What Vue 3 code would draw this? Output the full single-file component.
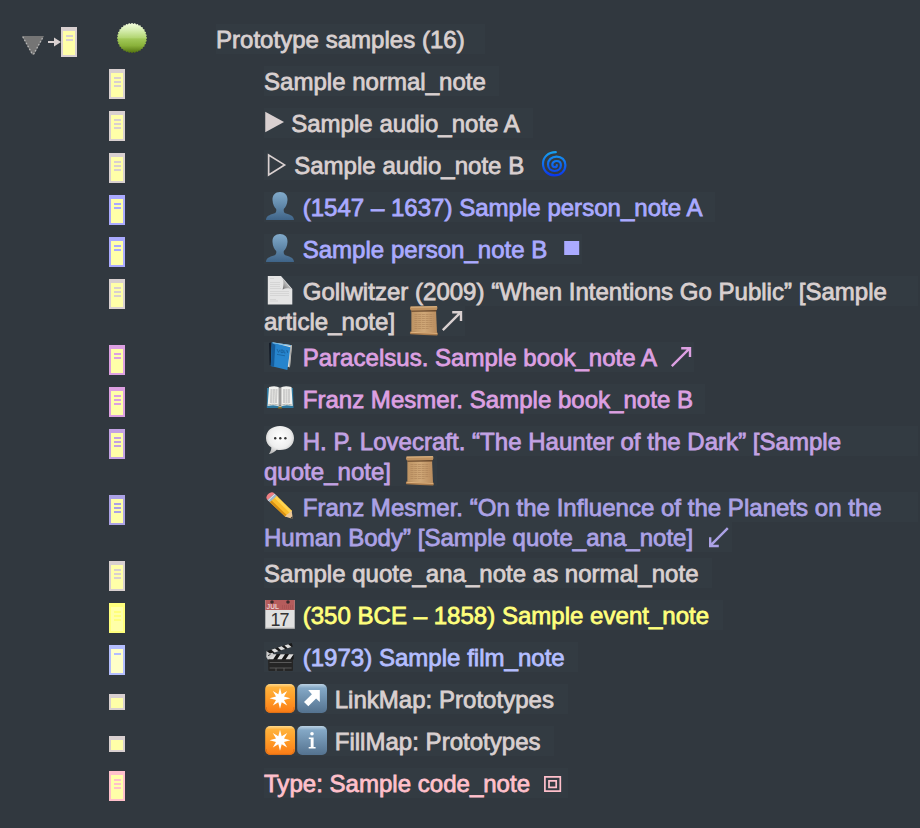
<script setup>
const notes = [
  { tone: 'plain', bars: 3, lines: [{ w: 235, parts: ['Sample normal_note'] }] },
  { tone: 'plain', bars: 3, lines: [{ w: 269, parts: [{ i: 'play', w: 20.5 }, ' Sample audio_note A'] }] },
  { tone: 'plain', bars: 3, lines: [{ w: 306, parts: [{ i: 'play-open', w: 23.5 }, ' Sample audio_note B  ', { i: 'spiral', w: 32 }] }] },
  { tone: 'person', bars: 2, lines: [{ w: 451, parts: [{ i: 'person', w: 32 }, ' (1547 – 1637) Sample person_note A'] }] },
  { tone: 'person', bars: 2, lines: [{ w: 318, parts: [{ i: 'person', w: 32 }, ' Sample person_note B  ', { i: 'square', w: 20 }] }] },
  {
    tone: 'plain', bars: 3, lines: [
      { w: 654, parts: [{ i: 'page', w: 32 }, ' Gollwitzer (2009) “When Intentions Go Public” [Sample'] },
      { w: 201, parts: ['article_note]  ', { i: 'scroll', w: 32 }, { i: 'arrow-ne', w: 24 }] },
    ],
  },
  { tone: 'book', bars: 2, lines: [{ w: 430, parts: [{ i: 'book', w: 32 }, ' Paracelsus. Sample book_note A  ', { i: 'arrow-ne', w: 24 }] }] },
  { tone: 'book', bars: 3, lines: [{ w: 441, parts: [{ i: 'open-book', w: 32 }, ' Franz Mesmer. Sample book_note B'] }] },
  {
    tone: 'quote', bars: 3, lines: [
      { w: 654, parts: [{ i: 'bubble', w: 32 }, ' H. P. Lovecraft. “The Haunter of the Dark” [Sample'] },
      { w: 173, parts: ['quote_note]  ', { i: 'scroll', w: 32 }] },
    ],
  },
  {
    tone: 'analysis', bars: 3, lines: [
      { w: 654, parts: [{ i: 'pencil', w: 32 }, ' Franz Mesmer. “On the Influence of the Planets on the'] },
      { w: 468, parts: ['Human Body” [Sample quote_ana_note]  ', { i: 'arrow-sw', w: 24 }] },
    ],
  },
  { tone: 'plain', bars: 3, lines: [{ w: 448, parts: ['Sample quote_ana_note as normal_note'] }] },
  { tone: 'event', bars: 3, lines: [{ w: 459, parts: [{ i: 'calendar', w: 32 }, ' (350 BCE – 1858) Sample event_note'] }] },
  { tone: 'film', bars: 1, lines: [{ w: 314, parts: [{ i: 'clapper', w: 32 }, ' (1973) Sample film_note'] }] },
  { tone: 'plain', bars: 0, lines: [{ w: 304, parts: [{ i: 'star', w: 32 }, { i: 'link', w: 32 }, ' LinkMap: Prototypes'] }] },
  { tone: 'plain', bars: 0, lines: [{ w: 290, parts: [{ i: 'star', w: 32 }, { i: 'info', w: 32 }, ' FillMap: Prototypes'] }] },
  { tone: 'code', bars: 3, lines: [{ w: 304, parts: ['Type: Sample code_note  ', { i: 'nested', w: 20 }] }] },
]

const badge = Array.from({ length: 64 }, (_, k) => {
  const r = k % 2 ? 14.1 : 15.2
  const a = (k * Math.PI) / 32
  return `${(15 + r * Math.cos(a)).toFixed(2)},${(15 + r * Math.sin(a)).toFixed(2)}`
}).join(' ')
</script>

<template>
  <svg class="sprites" width="0" height="0" aria-hidden="true">
    <defs>
      <linearGradient id="g-ball" x1="0" y1="0" x2="0" y2="1">
        <stop offset="0" stop-color="#f6ffe0" /><stop offset=".25" stop-color="#d5edae" /><stop offset=".49" stop-color="#b3d673" /><stop offset=".53" stop-color="#a1c858" /><stop offset=".75" stop-color="#8ab23b" /><stop offset="1" stop-color="#506f0c" />
      </linearGradient>
      <linearGradient id="g-spiral" x1="0" y1="0" x2="0" y2="1"><stop offset="0" stop-color="#16a0f0" /><stop offset="1" stop-color="#0a38ee" /></linearGradient>
      <linearGradient id="g-person" x1="0" y1="0" x2="0" y2="1"><stop offset="0" stop-color="#82abcb" /><stop offset="1" stop-color="#3f6488" /></linearGradient>
      <linearGradient id="g-fold" x1="0" y1="1" x2="1" y2="0"><stop offset="0" stop-color="#555" /><stop offset=".4" stop-color="#aaa" /><stop offset="1" stop-color="#fff" /></linearGradient>
      <linearGradient id="g-scroll" x1="0" y1="0" x2="1" y2="0"><stop offset="0" stop-color="#bd9363" /><stop offset=".5" stop-color="#d0a878" /><stop offset="1" stop-color="#b98c5e" /></linearGradient>
      <linearGradient id="g-orange" x1="0" y1="0" x2="0" y2="1"><stop offset="0" stop-color="#ffd98c" /><stop offset=".12" stop-color="#ffb23c" /><stop offset=".5" stop-color="#ff9d28" /><stop offset="1" stop-color="#fb7b16" /></linearGradient>
      <linearGradient id="g-blue" x1="0" y1="0" x2="0" y2="1"><stop offset="0" stop-color="#bdd3e4" /><stop offset=".14" stop-color="#84a8c6" /><stop offset="1" stop-color="#54728f" /></linearGradient>
      <radialGradient id="g-bubble" cx=".5" cy=".4" r=".6"><stop offset="0" stop-color="#fff" /><stop offset=".65" stop-color="#eee" /><stop offset="1" stop-color="#bdbdbd" /></radialGradient>
    </defs>

    <symbol id="i-play" viewBox="0 0 20 30"><path d="M1 3.7V24.3L19.8 14Z" fill="currentColor" /></symbol>
    <symbol id="i-play-open" viewBox="0 0 23 30"><path d="M4.4 5V24.9L20.3 14.9Z" fill="none" stroke="currentColor" stroke-width="1.7" /></symbol>
    <symbol id="i-spiral" viewBox="0 0 32 30">
      <path transform="translate(.6 .2)" d="M17.2 2C9.5 2 4.4 6.8 4.4 13.6C4.4 20.4 9.6 25.2 15.8 25.2C22.2 25.2 26.8 20.8 26.8 14.8C26.8 9.6 23 6.4 18 6.4C12.8 6.4 9.4 9.8 9.4 14C9.4 18.2 12.4 20.8 16 20.8C20 20.8 22.3 18.2 22.3 15.1C22.3 12.4 20.4 10.8 18 10.8C15.4 10.8 13.7 12.5 13.7 14.4C13.7 16.2 15 17 16.2 17C17.6 17 18.4 16.2 18.2 14.9" fill="none" stroke="url(#g-spiral)" stroke-width="2.2" stroke-linecap="round" />
    </symbol>
    <symbol id="i-person" viewBox="0 0 32 30"><path d="M16 0C20.8 0 23.7 3 23.5 8C23.3 12.5 21.6 15.3 19.8 17C19.4 19.4 20 20.8 22 21.6C26.8 23.2 29.7 24 30 28H2C2.3 24 5.2 23.2 10 21.6C12 20.8 12.6 19.4 12.2 17C10.4 15.3 8.7 12.5 8.5 8C8.3 3 11.2 0 16 0Z" fill="url(#g-person)" /></symbol>
    <symbol id="i-square" viewBox="0 0 20 30"><rect x="3.2" y="7" width="15" height="14" fill="currentColor" /></symbol>
    <symbol id="i-page" viewBox="0 0 32 30">
      <path d="M3.8 0H17L28.3 13V28.4H3.8Z" fill="#e4e4e4" />
      <path d="M6 2.5h4M6 6.5h10M6 8.5h10M6 10.5h10M6 12.5h11M6 15.5h19M6 17.5h19M6 19.5h19M6 23.5h6M6 25h8" stroke="#d2d2d2" stroke-width=".9" />
      <path d="M16.5 0C20 3 20 8 18.6 13.4C22 11.8 26 12 28.3 14.2Z" fill="url(#g-fold)" />
    </symbol>
    <symbol id="i-scroll" viewBox="0 0 32 30">
      <path d="M3.4 3H28L29 27H3.4Z" fill="url(#g-scroll)" />
      <path d="M6.5 8.5h19M6.5 10.5h19M6.5 12.5h19M6.5 14.5h19M6.5 16.5h19M6.5 18.5h19M6.5 20.5h19M6.5 22.5h15" stroke="#ab8257" stroke-width=".6" stroke-dasharray="3 .7" />
      <path d="M3.4 4.6L28.4 4V5.6L3.4 5.8Z" fill="#67472b" />
      <path d="M2.4 .5L29 0Q30 2 28.8 4L2.6 4.3Q1.4 2.5 2.4 .5Z" fill="#bd905f" />
      <path d="M2.8 1.2L28.8 .8" stroke="#dcb686" />
      <path d="M2.4 25.5Q16 27 29.4 26.5Q30.6 28 29.2 29.4Q16 29.2 2.4 28.3Q1.2 27 2.4 25.5Z" fill="#a97b4d" /><path d="M2.6 26.3L29.2 27.4" stroke="#dfb37f" />
    </symbol>
    <symbol id="i-arrow-ne" viewBox="0 0 24 30"><path d="M2.8 24.2L20.6 6.4M12.2 6.2H21V15" fill="none" stroke="currentColor" stroke-width="2.4" /></symbol>
    <symbol id="i-arrow-sw" viewBox="0 0 24 30"><path d="M20.8 6.2L3.4 23.6M11.8 24H3.2V15.2" fill="none" stroke="currentColor" stroke-width="2.4" /></symbol>
    <symbol id="i-book" viewBox="0 0 32 30">
      <path d="M5 1L7.8 .3L9 24.2L5.6 23Z" fill="#161d28" />
      <path d="M9 .4L28 3.2L26 25L9 23.5Z" fill="#e6e1d8" /><path d="M27.2 3L25.4 25.5" stroke="#989898" stroke-width=".8" />
      <path d="M7.6 .3L26.4 5.2L23.4 27.9L6.8 23.9Z" fill="#2684cd" /><path d="M8 .7L11.3 3L10 24.7L6.8 23.9Z" fill="#165c9a" />
      <path d="M8.5 .8L27 3.6" stroke="#70b7e5" />
      <path d="M13 7l1.5 3.4L16 7.6M17 8h2v2.6h-2zM20 8.4v2.5h1.5M22 8.8h1.5v2.2M13 12.4l8 1.4" fill="none" stroke="#175a94" stroke-width=".7" />
    </symbol>
    <symbol id="i-open-book" viewBox="0 0 32 30">
      <path d="M3 4L29 4L29.5 24H2.8Z" fill="#2e789f" />
      <path d="M5 3Q12 1 16 4Q20 1 27.5 3L28.7 22Q20.5 20 16.2 23Q11 20 3.6 22Z" fill="#f1f1ee" />
      <path d="M4 21Q11.5 19 16 22Q20.5 19 28.4 21" fill="none" stroke="#b9b9b3" />
      <path d="M16 4V22" stroke="#555" stroke-width="1.2" /><path d="M14.8 3.8V21M17.2 3.8V21" stroke="#bbb" stroke-width="1" />
      <path d="M6.5 6h7M6.4 8h7M6.3 10h7M6.2 12h7M6.1 14h7M6 16h7M6 18h7M19 6h7M19 8h7M19 10h7M19 12h7M19 14h7M19 16h7M19 18h7" stroke="#999" stroke-width=".8" stroke-dasharray="2 .5" />
      <path d="M14.2 22.7h3.6v1.8h-3.6z" fill="#866e28" />
    </symbol>
    <symbol id="i-bubble" viewBox="0 0 32 30">
      <path d="M16 0C24.2 0 30 4.9 30 12C30 19.3 24.2 24 16 24C14.8 24 13.7 23.9 12.7 23.7C10.6 26 8 27.4 4.9 28C6.4 26.2 7.3 24 7.4 21.5C3.9 19.4 2 16.2 2 12C2 4.9 7.8 0 16 0Z" fill="url(#g-bubble)" />
      <circle cx="11.2" cy="12.3" r="1.2" fill="#333" /><circle cx="16.3" cy="12.3" r="1.2" fill="#333" /><circle cx="21.4" cy="12.3" r="1.2" fill="#333" />
    </symbol>
    <symbol id="i-pencil" viewBox="0 0 32 30">
      <path d="M2.3 5.8Q2.8 1.8 7 .4Q9 0 10.4 1.4L13 4L6.2 10.4L3 7.5Z" fill="#ee7f83" />
      <path d="M10.5 1.8L13.6 4.6L6.6 10.8L3.5 8Z" fill="#9fb8c8" /><path d="M10.8 2.2L4.2 8.5" stroke="#dbe6ec" />
      <path d="M12.8 4L28 19L21.6 25L5.8 10.2Z" fill="#fbbd2c" /><path d="M12.8 4L28 19L26 21L10.7 6.2Z" fill="#ffd450" /><path d="M7.6 8.6L5.8 10.2L21.6 25L23.2 23.5Z" fill="#d78f14" />
      <path d="M27.6 18.4L28.9 26.9L21 24.6L23 22.6L25 21Z" fill="#edc895" /><path d="M28.4 24.2L28.9 26.9L26.2 26.2Z" fill="#333" />
    </symbol>
    <symbol id="i-calendar" viewBox="0 0 32 30">
      <rect x="1.3" y="0" width="29.4" height="28.6" fill="#e0e0e0" /><rect x="1.3" y="0" width="29.4" height="10" fill="#b65c5c" />
      <circle cx="8" cy="2" r="1.8" fill="#3b2b2d" /><circle cx="24" cy="2" r="1.8" fill="#3b2b2d" />
      <path d="M18 6h11M18 8h11" stroke="#9e4d4d" stroke-dasharray="1 1" /><path d="M1.3 28.2H30.7" stroke="#aaa" />
    </symbol>
    <symbol id="i-clapper" viewBox="0 0 32 30">
      <path d="M4 12H29V28Q29 29 28 29H5.5Q4.3 29 4.3 28Z" fill="#252525" />
      <path d="M2.6 9.2L27.7 1L28.8 4.5L4.5 12.5Z" fill="#181818" />
      <path d="M7.4 7.7L11 6.5L14.6 9.2L10.5 10.5ZM14 5.5L17.7 4.3L21.1 7L17.1 8.3ZM20.5 3.4L24.2 2.2L27.5 4.9L23.6 6.2Z" fill="#ddd" />
      <path d="M4 12.3H29.6V17.3H4Z" fill="#151515" />
      <path d="M8 12.3H12.5L9.2 17.3H4.7ZM16.5 12.3H21L17.7 17.3H13.2ZM25 12.3H29.6L26.2 17.3H21.7Z" fill="#ddd" />
      <path d="M2.5 9L6 11.5L8.5 10.8L10 13.5L4 17.8L2.3 15Z" fill="#ccc" /><path d="M4 13.6L6.4 12.5" stroke="#333" />
      <path d="M5.6 20.5h22M5.6 26h22M12 26v3M20 26v3" stroke="#666" stroke-width=".8" />
    </symbol>
    <symbol id="i-star" viewBox="0 0 32 30">
      <rect x="1.2" y="0" width="29.8" height="29" rx="5" fill="url(#g-orange)" /><path d="M2.2 23Q2.4 28.4 6.5 28.4H25.7Q29.8 28.4 30 23" fill="none" stroke="#d46d16" stroke-width=".8" />
      <path d="M16 3.8L17.7 10.3L23.2 6.9L20 12.4L26.4 14.2L20 16L23.2 21.5L17.7 18.2L16 24.7L14.3 18.2L8.8 21.5L12 16L5.6 14.2L12 12.4L8.8 6.9L14.3 10.3Z" fill="#fff" />
    </symbol>
    <symbol id="i-link" viewBox="0 0 32 30">
      <rect x="1.2" y="0" width="29.8" height="29" rx="5" fill="url(#g-blue)" /><path d="M12.2 6H23.8V18L20.1 14.4L12.3 22.3L8 18L15.9 10.2Z" fill="#fff" />
    </symbol>
    <symbol id="i-info" viewBox="0 0 32 30">
      <rect x="1.2" y="0" width="29.8" height="29" rx="5" fill="url(#g-blue)" /><circle cx="16" cy="7.8" r="1.8" fill="#fff" /><path d="M12.8 11.4H17.6V21H19.6V22.6H12.7V21H14.7V13H12.8Z" fill="#fff" />
    </symbol>
    <symbol id="i-nested" viewBox="0 0 20 30"><path d="M1.9 8.8H17.3V23.2H1.9ZM6 12.8H13.2V19.4H6Z" fill="none" stroke="currentColor" stroke-width="1.7" /></symbol>
  </svg>

  <main class="outline">
    <header class="row plain">
      <div class="controls">
        <svg class="disclosure" viewBox="0 0 22 19"><path d="M0 0H22L12 18.5H10Z" fill="#757575" /><path d="M.8 .8L10.2 17.8H11.8L21.2 .8" fill="none" stroke="#b5b5b5" stroke-width="1.3" stroke-dasharray="1.6 1.8" /></svg>
        <svg class="pointer" viewBox="0 0 13 10"><path d="M0 4H6V.5L13 5L6 9.5V6H0Z" fill="currentColor" /></svg>
        <span class="note"><i v-for="b in 2" :key="b" /></span>
        <svg class="ball" viewBox="0 0 30 30"><polygon :points="badge" fill="url(#g-ball)" /></svg>
      </div>
      <div class="copy"><div class="line head"><span>Prototype samples (16)</span></div></div>
    </header>
    <section v-for="(note, n) in notes" :key="n" class="row child" :class="note.tone">
      <div class="gutter"><span class="note" :class="{ short: !note.bars }"><i v-for="b in note.bars" :key="b" /></span></div>
      <div class="copy">
        <div v-for="(line, l) in note.lines" :key="l" class="line" :style="{ width: line.w + 'px' }">
          <template v-for="(part, p) in line.parts" :key="p">
            <span v-if="typeof part === 'string'">{{ part }}</span>
            <svg v-else class="icon" :style="{ width: part.w + 'px' }">
              <use :href="'#i-' + part.i" />
              <template v-if="part.i === 'calendar'">
                <text x="2.6" y="9.2" class="month">JUL</text>
                <text x="15.6" y="25.6" class="day">17</text>
              </template>
            </svg>
          </template>
        </div>
      </div>
    </section>
  </main>
</template>

<style>
body { margin: 0; background: #31383f; }
</style>

<style scoped>
.sprites { position: absolute; }
.outline {
  box-sizing: border-box;
  width: 920px;
  height: 828px;
  padding-top: 24px;
  overflow: hidden;
  background: #31383f;
  font-family: "Liberation Sans", Arial, sans-serif;
  font-size: 24px;
  line-height: 30px;
}
.row { display: flex; min-height: 42px; color: var(--tone); --paper: #ffffa8; }
.controls { display: flex; width: 216px; flex: none; align-items: flex-start; }
.gutter { width: 155px; flex: none; padding-left: 109px; }
.disclosure { width: 22px; height: 19px; margin: 12px 4px 0 22px; }
.pointer { width: 13px; height: 10px; margin-top: 13px; }
.ball { width: 30px; height: 30px; margin: -1px 0 0 40px; }
.note {
  box-sizing: border-box;
  display: flex;
  flex-direction: column;
  gap: 2px;
  width: 16px;
  height: 30px;
  margin-top: 3px;
  padding: 4px 2px 0 3px;
  border: 2px solid var(--tone);
  border-top-width: 4px;
  background: var(--paper);
}
.note i { width: 7px; height: 2px; flex: none; background: var(--tone); }
.note.short { height: 16px; margin-top: 10px; }
.copy { padding-bottom: 6px; }
.line { display: flex; height: 30px; background: #333b42; white-space: pre; letter-spacing: .025px; -webkit-text-stroke: .8px currentColor; }
.line span { padding-top: 1px; }
.head { width: 269px; }
.icon { height: 30px; flex: none; }
.month { font: bold 6.5px "Liberation Sans", sans-serif; fill: #ead0d0; letter-spacing: 0; -webkit-text-stroke: 0; }
.day { font: 18px "Liberation Sans", sans-serif; fill: #333; text-anchor: middle; letter-spacing: -1px; -webkit-text-stroke: .3px #333; }
.plain { --tone: #d9d0d0; }
.person { --tone: #aaaaff; }
.book { --tone: #dda0e2; }
.quote { --tone: #c3a2e4; }
.analysis { --tone: #aca2e6; }
.event { --tone: #ffff7c; }
.film { --tone: #b4beff; }
.film { --paper: #ffffc8; }
.code { --tone: #ffc0cb; }
</style>
